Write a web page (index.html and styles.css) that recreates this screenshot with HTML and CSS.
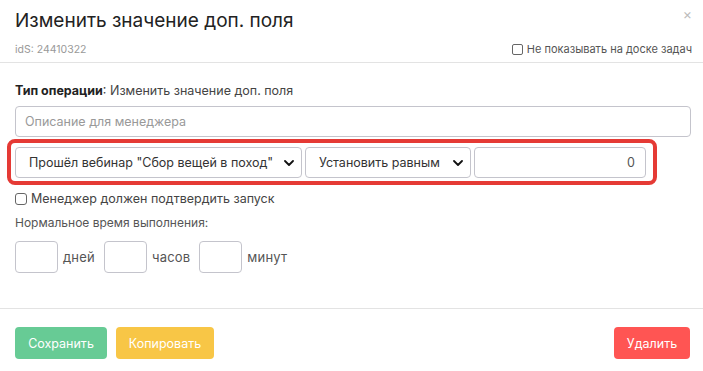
FILE: index.html
```html
<!DOCTYPE html>
<html lang="ru">
<head>
<meta charset="utf-8">
<link rel="stylesheet" href="styles.css">
</head>
<body>
<div class="modal">
  <div class="header">
    <div class="title-row">
      <h1 class="title">Изменить значение доп. поля</h1>
      <span class="close">×</span>
    </div>
    <div class="meta-row">
      <span class="ids">idS: 24410322</span>
      <label class="check small"><span class="box"></span>Не показывать на доске задач</label>
    </div>
  </div>
  <div class="body">
    <div class="optype"><b>Тип операции</b>: Изменить значение доп. поля</div>
    <div class="input wide placeholder">Описание для менеджера</div>
    <div class="highlight">
      <div class="select s1"><span>Прошёл вебинар "Сбор вещей в поход"</span><svg class="chev" viewBox="0 0 10 6" width="10" height="6"><path d="M1 1l4 4 4-4" fill="none" stroke="#111" stroke-width="1.8" stroke-linecap="round" stroke-linejoin="round"/></svg></div>
      <div class="select s2"><span>Установить равным</span><svg class="chev" viewBox="0 0 10 6" width="10" height="6"><path d="M1 1l4 4 4-4" fill="none" stroke="#111" stroke-width="1.8" stroke-linecap="round" stroke-linejoin="round"/></svg></div>
      <div class="input num">0</div>
    </div>
    <label class="check confirm"><span class="box"></span>Менеджер должен подтвердить запуск</label>
    <div class="label">Нормальное время выполнения:</div>
    <div class="time-row">
      <div class="input tbox"></div><span class="unit">дней</span>
      <div class="input tbox"></div><span class="unit">часов</span>
      <div class="input tbox"></div><span class="unit">минут</span>
    </div>
  </div>
  <div class="footer">
    <div class="btn-group">
      <button class="btn green">Сохранить</button>
      <button class="btn yellow">Копировать</button>
    </div>
    <button class="btn red">Удалить</button>
  </div>
</div>
</body>
</html>
```

FILE: styles.css
```css
* { box-sizing: border-box; }
body {
  margin: 0;
  background: #fff;
  font-family: Inter, "Noto Sans", sans-serif;
  color: #444;
}
.modal { width: 703px; height: 371px; background: #fff; }
.header { border-bottom: 1px solid #e3e3e3; padding: 0 11px 0 15px; height: 63px; }
.title-row { display: flex; justify-content: space-between; align-items: flex-start; }
.title {
  margin: 0;
  padding-top: 9px;
  font-size: 19px;
  font-weight: 400;
  color: #222;
  line-height: 24px;
}
.close { color: #bbb; font-size: 14px; line-height: 14px; padding-top: 7px; }
.meta-row {
  display: flex;
  justify-content: space-between;
  align-items: center;
  margin-top: 9px;
}
.ids { font-size: 10.5px; color: #999; }
.check { display: flex; align-items: center; color: #444; }
.check.small { font-size: 11px; color: #555; }
.box {
  display: inline-block;
  width: 11px;
  height: 11px;
  border: 1px solid #666;
  border-radius: 2px;
  margin-right: 4px;
  background: #fff;
}
.body { padding: 20px 12px 0 15px; height: 246px; border-bottom: 1px solid #e3e3e3; }
.optype { font-size: 12.5px; line-height: 16px; color: #444; }
.optype b { color: #222; font-weight: 700; }
.input {
  border: 1px solid #c4c4cc;
  border-radius: 4px;
  background: #fff;
  font-size: 12.5px;
  color: #444;
  display: flex;
  align-items: center;
}
.wide { margin-top: 7px; height: 31px; padding: 0 9px; }
.placeholder { color: #999; }
.highlight {
  margin: 2px 0 0 -8px;
  width: 650px;
  height: 46px;
  border: 4px solid #e53a35;
  border-radius: 8px;
  padding: 4px 7px 0 4px;
  display: flex;
  gap: 3px;
}
.select {
  height: 31px;
  border: 1px solid #c4c4cc;
  border-radius: 4px;
  display: flex;
  align-items: center;
  justify-content: space-between;
  padding: 0 7px 0 13px;
  font-size: 12.5px;
  color: #333;
}
.s1 { width: 287px; }
.s2 { width: 166px; }
.chev { display: block; }
.num { flex: 1; height: 31px; justify-content: flex-end; padding-right: 10px; color: #555; }
.confirm { margin-top: 6px; font-size: 12.5px; line-height: 16px; }
.confirm .box { width: 12px; height: 12px; border-radius: 3px; margin-right: 4px; }
.label { margin-top: 8px; font-size: 12px; line-height: 16px; color: #555; }
.time-row { display: flex; align-items: center; margin-top: 10px; }
.tbox { width: 43px; height: 32px; }
.unit { font-size: 13px; color: #555; margin: 0 9px 0 5px; letter-spacing: 0.2px; }
.footer {
  display: flex;
  justify-content: space-between;
  padding: 18px 13px 0 15px;
}
.btn-group { display: flex; gap: 9px; }
.btn {
  height: 32px;
  border: none;
  border-radius: 4px;
  color: #fff;
  font-family: Inter, "Noto Sans", sans-serif;
  font-size: 12.5px;
  padding: 0 12px;
}
.green { background: #67cb95; width: 92px; }
.yellow { background: #f8c646; width: 98px; }
.red { background: #ff5553; width: 76px; }
```
